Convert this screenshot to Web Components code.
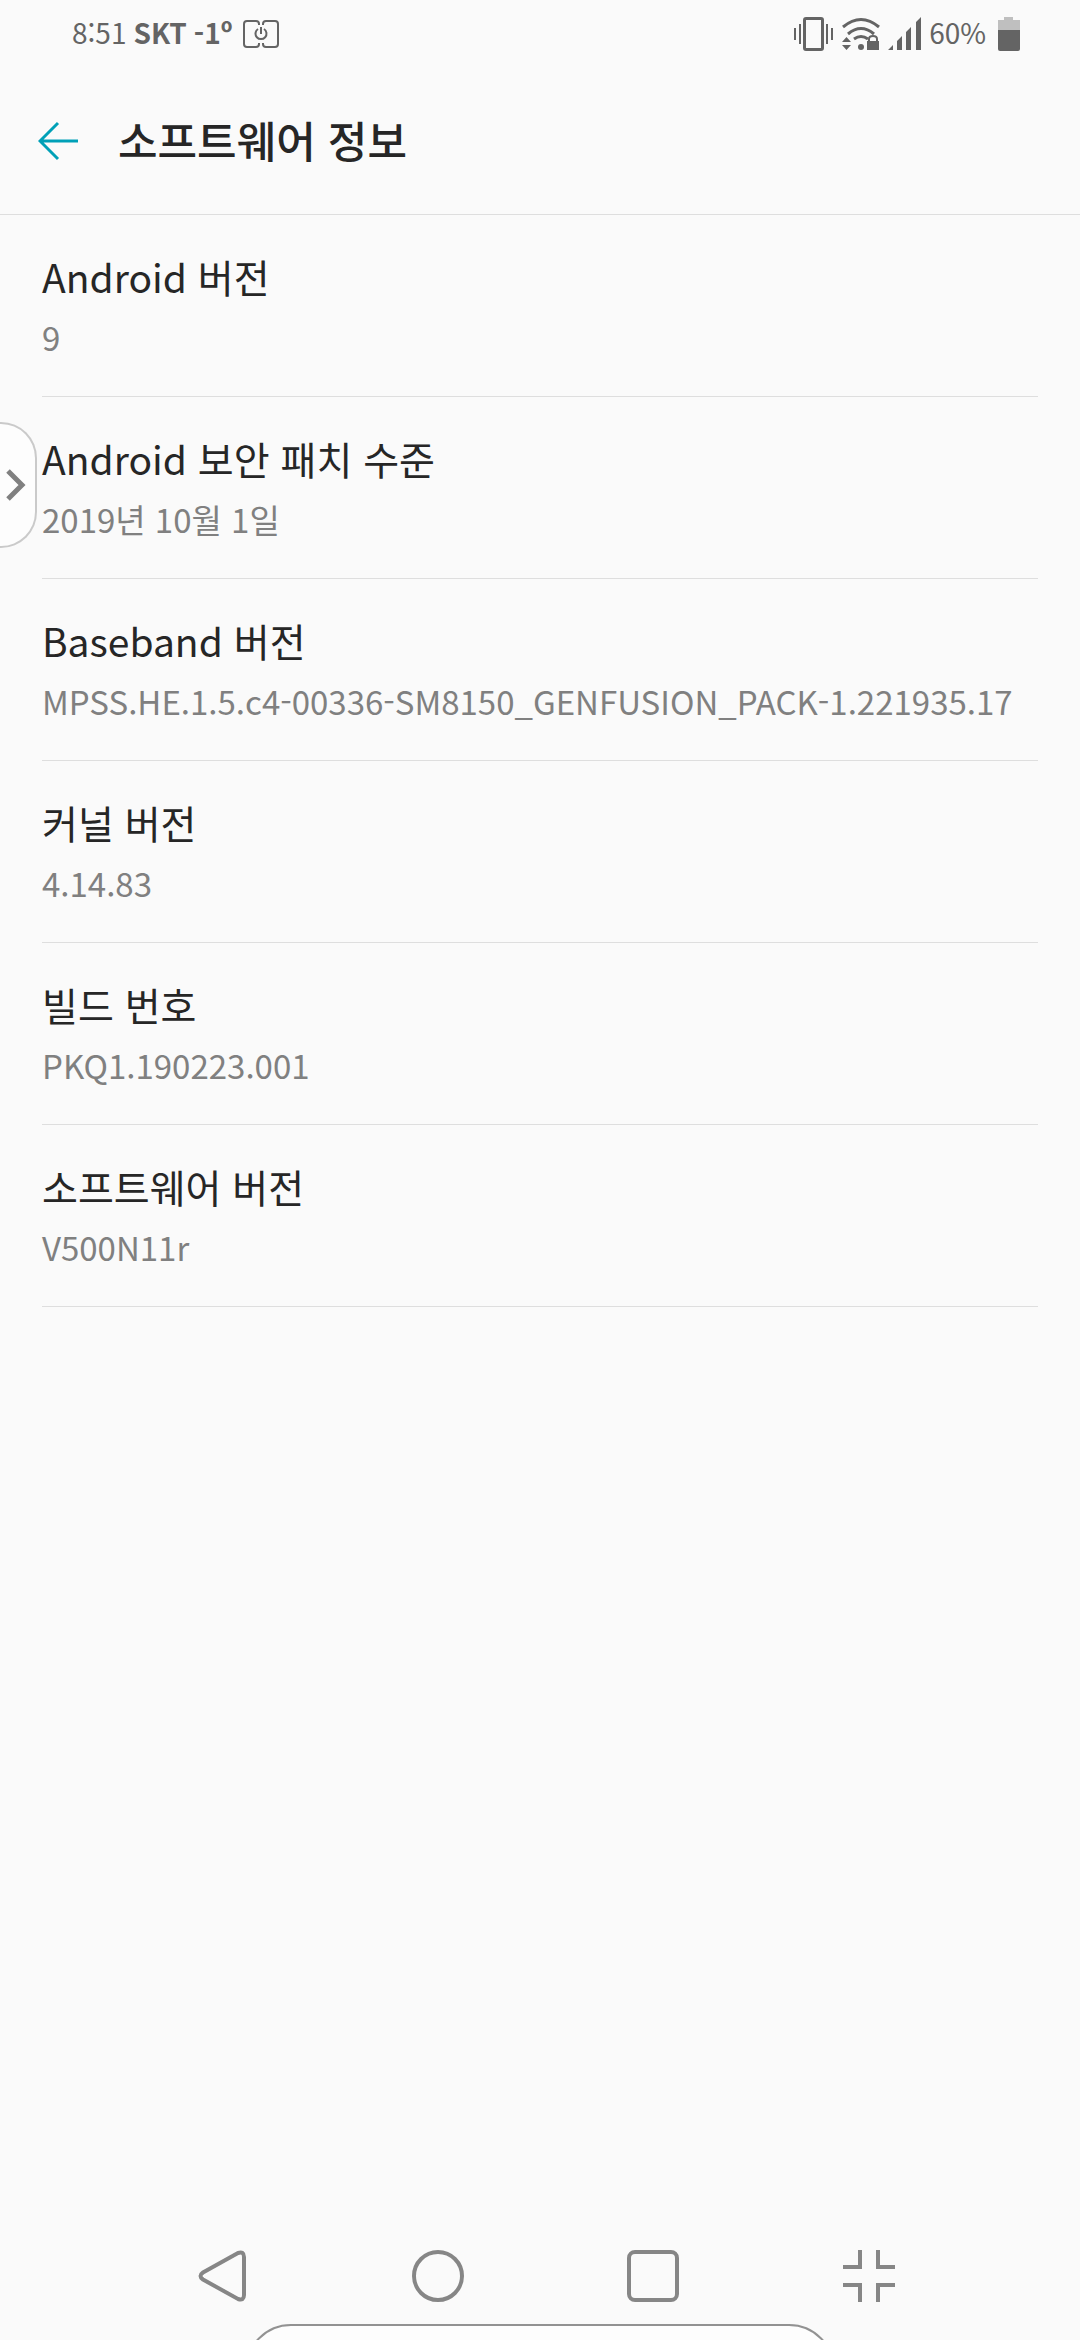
<!DOCTYPE html>
<html lang="ko">
<head>
<meta charset="utf-8">
<meta name="viewport" content="width=device-width, initial-scale=1">
<title>소프트웨어 정보</title>
<style>
  html, body { margin: 0; height: 100%; }
  body {
    background: #fafafa;
    color: #262626;
    font-family: "Noto Sans CJK KR", "Noto Sans", sans-serif;
  }
</style>
</head>
<body>
<about-screen></about-screen>
<script>
const define = (name, html) => {
  const template = document.createElement('template');
  template.innerHTML = html;
  customElements.define(name, class extends HTMLElement {
    constructor() {
      super();
      this.attachShadow({ mode: 'open' }).append(template.content.cloneNode(true));
    }
  });
};

define('status-bar', `
  <style>
    :host { display: flex; align-items: center; justify-content: space-between; height: 68px; padding: 0 60px 0 72px; color: #646464; font-size: 28px; line-height: 40px; }
    div { display: flex; align-items: center; }
    .left { gap: 7px; }
    .right { gap: 8px; }
    span, b { padding-bottom: 4px; }
    svg { display: block; }
    .power { margin-left: 3px; }
    .battery { margin-left: 4px; }
  </style>
  <div class="left">
    <span>8:51</span><b>SKT</b><b>-1º</b>
    <svg class="power" width="36" height="28" viewBox="0 0 36 28" fill="none" stroke="currentColor" stroke-width="2">
      <path d="M16 5V4q0-3-3-3H4Q1 1 1 4v20q0 3 3 3h9q3 0 3-3v-1M20 5V4q0-3 3-3h9q3 0 3 3v20q0 3-3 3h-9q-3 0-3-3v-1"/>
      <path d="M15 9a5.500 5.500 0 1 0 6 0M18 7v7"/>
    </svg>
  </div>
  <div class="right">
    <svg width="40" height="34" viewBox="0 0 40 34" fill="currentColor">
      <path fill-rule="evenodd" d="M12 0h15q3 0 3 3v28q0 3-3 3H12q-3 0-3-3V3q0-3 3-3Zm0 3v28h15V3Z"/>
      <path d="M0 11h2v12H0zM5 7h2v20H5zM32 7h2v20h-2zM37 11h2v12h-2z"/>
    </svg>
    <svg width="38" height="34" viewBox="0 0 38 34" fill="none" stroke="currentColor" stroke-width="3">
      <path d="M1 10Q19-5 37 10M6 17q13-11 26 0M12 22q7-5 14 0"/>
      <g fill="currentColor" stroke="none"><circle cx="19" cy="30" r="3"/><path d="M0 25h9l-4.500-5zM0 28h9l-4.500 5zM25 24h12v9H25z"/></g>
      <path d="M27 25v-3q0-3 4-3t4 3v3" stroke-width="2"/>
    </svg>
    <svg width="33" height="34" viewBox="0 0 33 34" fill="currentColor">
      <path d="M0 33l5-5v5zM9 24l5-5v14H9zM18 15l5-5v23h-5zM28 5l5-5v33h-5z"/>
    </svg>
    <span>60%</span>
    <svg class="battery" width="22" height="34" viewBox="0 0 22 34">
      <path fill="#bfbfbf" d="M0 3h6V0h9v3h7v11H0z"/>
      <path fill="#646464" d="M0 13h22v19q0 2-2 2H2q-2 0-2-2z"/>
    </svg>
  </div>
`);

define('page-header', `
  <style>
    :host { display: flex; align-items: center; gap: 40px; box-sizing: border-box; height: 147px; padding: 0 38px; border-bottom: 1px solid #dedede; }
    button { display: block; border: 0; padding: 0; background: none; color: #00a0b7; }
    svg { display: block; }
    h1 { margin: 0; padding-bottom: 4px; font-size: 43px; line-height: 56px; font-weight: 500; }
  </style>
  <button aria-label="뒤로">
    <svg width="40" height="40" viewBox="0 0 40 40" fill="none" stroke="currentColor" stroke-width="3">
      <path d="M40 20H2M20 2L2 20l18 18"/>
    </svg>
  </button>
  <h1><slot></slot></h1>
`);

define('info-row', `
  <style>
    :host { display: flex; flex-direction: column; gap: 12px; padding: 36px 0 35px; border-bottom: 1px solid #dedede; }
    .title { font-size: 39px; line-height: 50px; font-weight: 400; }
    .value { font-size: 33px; line-height: 48px; color: #808080; overflow-wrap: anywhere; }
  </style>
  <div class="title"><slot name="title"></slot></div>
  <div class="value"><slot></slot></div>
`);

define('edge-tab', `
  <style>
    :host { display: block; }
    button { display: flex; align-items: center; box-sizing: border-box; width: 37px; height: 126px; padding: 0 0 0 6px; background: #fdfdfd; border: 2px solid #cacaca; border-left: 0; border-radius: 0 36px 36px 0; color: #808080; }
  </style>
  <button aria-label="패널 열기">
    <svg width="20" height="32" viewBox="0 0 20 32" fill="none" stroke="currentColor" stroke-width="5"><path d="M2 2l14 14L2 30"/></svg>
  </button>
`);

define('nav-bar', `
  <style>
    :host { display: grid; grid-template-columns: repeat(4, 1fr); height: 128px; padding: 0 103px 0 114px; color: #868686; }
    button { display: flex; align-items: center; justify-content: center; padding: 0; border: 0; background: none; color: inherit; }
    svg { display: block; fill: none; stroke: currentColor; stroke-width: 4; }
  </style>
  <button aria-label="뒤로"><svg width="52" height="52" viewBox="0 0 52 52"><path d="M42 3L7 22.500q-5 3.500 0 7L42 49q6 2 6-4V7q0-6-6-4Z"/></svg></button>
  <button aria-label="홈"><svg width="52" height="52" viewBox="0 0 52 52"><circle cx="26" cy="26" r="24"/></svg></button>
  <button aria-label="최근 앱"><svg width="52" height="52" viewBox="0 0 52 52"><rect x="2" y="2" width="48" height="48" rx="6"/></svg></button>
  <button aria-label="화면 축소"><svg width="52" height="52" viewBox="0 0 52 52"><path d="M17 0v17H0M35 0v17h17M0 35h17v17M52 35H35v17"/></svg></button>
`);

define('about-screen', `
  <style>
    :host { display: flex; flex-direction: column; position: relative; min-height: 100%; overflow: hidden; }
    main { flex: 1; padding: 0 42px; }
    edge-tab { position: absolute; left: 0; top: 422px; }
    .handle { position: absolute; bottom: -80px; left: 50%; box-sizing: border-box; width: 590px; height: 96px; margin-left: -295px; border: 2px solid #929292; border-radius: 46px; background: #fdfdfd; }
  </style>
  <status-bar></status-bar>
  <page-header>소프트웨어 정보</page-header>
  <main>
    <info-row><span slot="title">Android 버전</span>9</info-row>
    <info-row><span slot="title">Android 보안 패치 수준</span>2019년 10월 1일</info-row>
    <info-row><span slot="title">Baseband 버전</span>MPSS.HE.1.5.c4-00336-SM8150_GENFUSION_PACK-1.221935.17</info-row>
    <info-row><span slot="title">커널 버전</span>4.14.83</info-row>
    <info-row><span slot="title">빌드 번호</span>PKQ1.190223.001</info-row>
    <info-row><span slot="title">소프트웨어 버전</span>V500N11r</info-row>
  </main>
  <nav-bar></nav-bar>
  <edge-tab></edge-tab>
  <div class="handle"></div>
`);
</script>
</body>
</html>
